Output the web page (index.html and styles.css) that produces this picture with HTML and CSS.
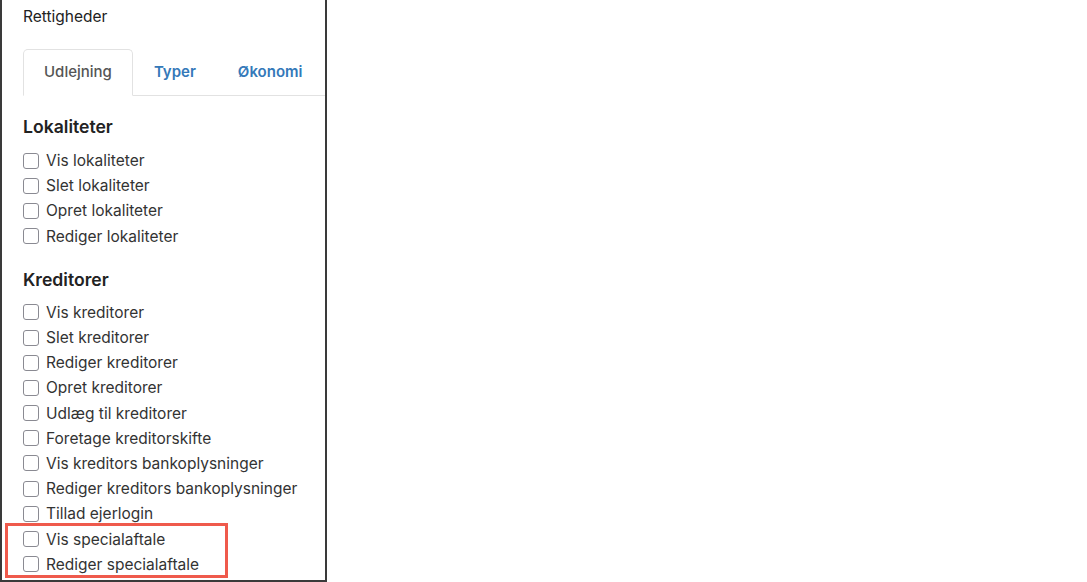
FILE: index.html
```html
<!DOCTYPE html>
<html lang="da">

<head>
  <meta charset="UTF-8">
  <meta name="viewport" content="width=device-width, initial-scale=1.0">
  <title>Rettigheder</title>
  <link rel="stylesheet" href="styles.css">
</head>

<body>
  <div class="panel">
    <div class="panel-title">Rettigheder</div>

    <ul class="tabs">
      <li class="tab active">Udlejning</li>
      <li class="tab">Typer</li>
      <li class="tab">Økonomi</li>
    </ul>

    <div class="tab-content">
      <h3>Lokaliteter</h3>
      <label class="check"><input type="checkbox"> Vis lokaliteter</label>
      <label class="check"><input type="checkbox"> Slet lokaliteter</label>
      <label class="check"><input type="checkbox"> Opret lokaliteter</label>
      <label class="check"><input type="checkbox"> Rediger lokaliteter</label>

      <h3>Kreditorer</h3>
      <label class="check"><input type="checkbox"> Vis kreditorer</label>
      <label class="check"><input type="checkbox"> Slet kreditorer</label>
      <label class="check"><input type="checkbox"> Rediger kreditorer</label>
      <label class="check"><input type="checkbox"> Opret kreditorer</label>
      <label class="check"><input type="checkbox"> Udlæg til kreditorer</label>
      <label class="check"><input type="checkbox"> Foretage kreditorskifte</label>
      <label class="check"><input type="checkbox"> Vis kreditors bankoplysninger</label>
      <label class="check"><input type="checkbox"> Rediger kreditors bankoplysninger</label>
      <label class="check"><input type="checkbox"> Tillad ejerlogin</label>

      <div class="highlight">
        <label class="check"><input type="checkbox"> Vis specialaftale</label>
        <label class="check"><input type="checkbox"> Rediger specialaftale</label>
      </div>
    </div>
  </div>
</body>

</html>
```

FILE: styles.css
```css
body {
  margin: 0;
  padding: 0;
  font-family: Inter, "Liberation Sans", Arial, sans-serif;
  color: #333;
  background: #fff;
}

.panel {
  width: 327px;
  height: 582px;
  border: 2px solid #3a3a3a;
  border-top: none;
  padding: 0 0 0 21px;
  box-sizing: border-box;
  overflow: hidden;
}

.panel-title {
  font-size: 15.5px;
  line-height: 18px;
  padding-top: 8px;
  color: #222;
}

.tabs {
  list-style: none;
  margin: 23px 0 0 0;
  padding: 0;
  display: flex;
  border-bottom: 1px solid #e2e2e2;
}

.tab {
  padding: 12px 20px 13px 20px;
  font-size: 15px;
  line-height: 20px;
  font-weight: 600;
  color: #3479b9;
  margin-bottom: -1px;
  border: 1px solid transparent;
  border-radius: 5px 5px 0 0;
}

.tab.active {
  color: #555;
  font-weight: 500;
  border-color: #e2e2e2;
  border-bottom-color: #fff;
}

.tab-content h3 {
  margin: 20px 0 10px 0;
  font-size: 17.6px;
  line-height: 22px;
  font-weight: 600;
  color: #222;
}

.tab-content h3 + .check {
  margin-top: -1px;
}

.tab-content h3:first-child + .check {
  margin-top: 0;
}

.check {
  display: flex;
  align-items: center;
  font-size: 15.5px;
  line-height: 25px;
  height: 25.2px;
  color: #333;
}

.check input {
  appearance: none;
  -webkit-appearance: none;
  width: 16px;
  height: 16px;
  margin: 0 7px 0 0;
  border: 1.5px solid #8a8a92;
  border-radius: 3px;
  background: #fff;
  box-sizing: border-box;
}

.highlight {
  position: relative;
}

.highlight::after {
  content: "";
  position: absolute;
  top: -3px;
  bottom: -1px;
  left: -18px;
  width: 223px;
  border: 3px solid #ef5a4c;
  box-sizing: border-box;
}
```
